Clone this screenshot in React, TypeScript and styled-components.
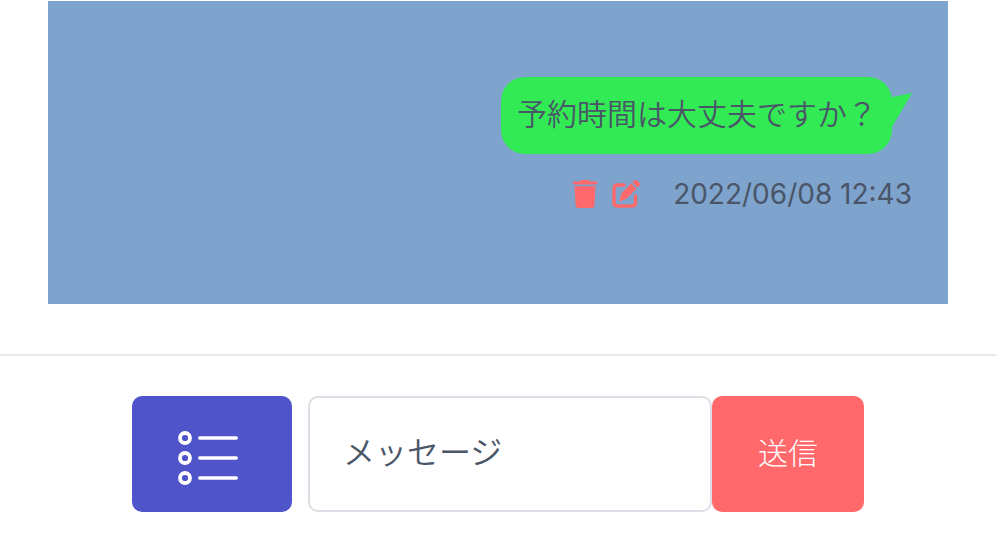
import React from "react";
import styled, { createGlobalStyle } from "styled-components";

const GlobalStyle = createGlobalStyle`
  * { box-sizing: border-box; }
  body {
    margin: 0;
    background: #fff;
    color: #4a5568;
    font-family: Roboto, "Noto Sans CJK JP", sans-serif;
  }
  button, input { font: inherit; }
`;

const Thread = styled.main`
  display: flex;
  flex-direction: column;
  align-items: flex-end;
  margin: 1px 48px 0;
  padding: 76px 36px 92px;
  background: #7ea3cd;
`;

const Bubble = styled.p`
  position: relative;
  margin: 0 20px 0 0;
  padding: 14px 15px 20px 16px;
  border-radius: 24px;
  background: #31ea54;
  font-family: "Noto Sans CJK JP", sans-serif;
  font-size: 30px;
  font-weight: 350;
  line-height: 43px;
`;

const Tail = styled.svg`
  position: absolute;
  top: 16px;
  left: calc(100% - 8px);
  width: 28px;
  height: 36px;
  fill: #31ea54;
`;

const Meta = styled.div`
  display: flex;
  align-items: center;
  gap: 10px;
  margin-top: 22px;
`;

const IconButton = styled.button`
  display: flex;
  padding: 0;
  border: 0;
  background: none;
  color: #ff696b;
  cursor: pointer;

  svg {
    width: 30px;
    height: 36px;
  }
`;

const Timestamp = styled.time`
  margin-left: 22px;
  font-family: Inter, sans-serif;
  font-size: 28px;
  line-height: 36px;
`;

const Composer = styled.form`
  display: flex;
  margin-top: 50px;
  padding: 40px 132px 26px;
  border-top: 2px solid #e8e9eb;
`;

const ActionButton = styled.button<{ $tone: string; $width: number }>`
  display: flex;
  align-items: center;
  justify-content: center;
  flex: 0 0 ${({ $width }) => $width}px;
  height: 116px;
  padding: 0 0 6px;
  border: 0;
  border-radius: 10px;
  background: ${({ $tone }) => $tone};
  color: #fff;
  font-family: "Noto Sans CJK JP", sans-serif;
  font-size: 30px;
  font-weight: 300;
  cursor: pointer;
`;

const ListIcon = styled.svg`
  width: 68px;
  height: 64px;
  margin-top: 14px;
  fill: none;
  stroke: currentColor;
  stroke-linecap: round;
`;

const MessageInput = styled.input`
  flex: 1;
  min-width: 0;
  height: 116px;
  margin-left: 16px;
  padding: 0 33px 8px;
  border: 2px solid #dae0e5;
  border-radius: 10px;
  background: #fff;
  color: #4a5568;
  font-family: "Noto Sans CJK JP", sans-serif;
  font-size: 32px;
  font-weight: 350;

  &::placeholder {
    color: #4a5568;
    opacity: 1;
  }
`;

const rows = [12, 32, 52];

export default function App() {
  return (
    <>
      <GlobalStyle />
      <Thread>
        <Bubble>
          予約時間は大丈夫ですか？
          <Tail viewBox="0 0 28 36" aria-hidden="true">
            <path d="M0 6 L8 4 L28 0 L8 34 L0 34Z" />
          </Tail>
        </Bubble>
        <Meta>
          <IconButton type="button" aria-label="削除">
            <svg viewBox="0 0 30 36" fill="currentColor" aria-hidden="true">
              <path d="M3 5.5H9Q9.5 4 11 4H17Q18.5 4 19 5.5H25Q26.3 5.5 26.3 7T25 8.4H3Q1.8 8.4 1.8 7T3 5.5Z" />
              <path d="M3.5 10.3H24.5L23.4 29.5Q23.2 32 20.7 32H7.3Q4.8 32 4.6 29.5Z" />
            </svg>
          </IconButton>
          <IconButton type="button" aria-label="編集">
            <svg viewBox="0 0 30 36" aria-hidden="true">
              <path
                d="M13 9H6.5Q3 9 3 12.5V26.5Q3 30 6.5 30H21Q24.5 30 24.5 26.5V20"
                fill="none"
                stroke="currentColor"
                strokeWidth="3.4"
                strokeLinecap="round"
              />
              <path
                d="M20.2 7.5L25.5 12.8L15.6 22.6L9.2 25.6Q8.3 25.7 8.4 24.8L10.7 17ZM21.4 6.3L23.3 4.4Q24.9 3.3 26.4 4.8L28.2 6.6Q29.5 8 28.5 9.7L26.6 11.6Z"
                fill="currentColor"
              />
            </svg>
          </IconButton>
          <Timestamp dateTime="2022-06-08T12:43">2022/06/08 12:43</Timestamp>
        </Meta>
      </Thread>
      <Composer onSubmit={(event) => event.preventDefault()}>
        <ActionButton type="button" $tone="#4f54c8" $width={160} aria-label="定型文">
          <ListIcon viewBox="0 0 68 64" aria-hidden="true">
            {rows.map((y) => (
              <React.Fragment key={y}>
                <circle cx="7" cy={y} r="5" strokeWidth="3.8" />
                <path d={`M21.8 ${y}H58.2`} strokeWidth="3.6" />
              </React.Fragment>
            ))}
          </ListIcon>
        </ActionButton>
        <MessageInput type="text" aria-label="メッセージ" placeholder="メッセージ" />
        <ActionButton type="submit" $tone="#ff696b" $width={152}>
          送信
        </ActionButton>
      </Composer>
    </>
  );
}
